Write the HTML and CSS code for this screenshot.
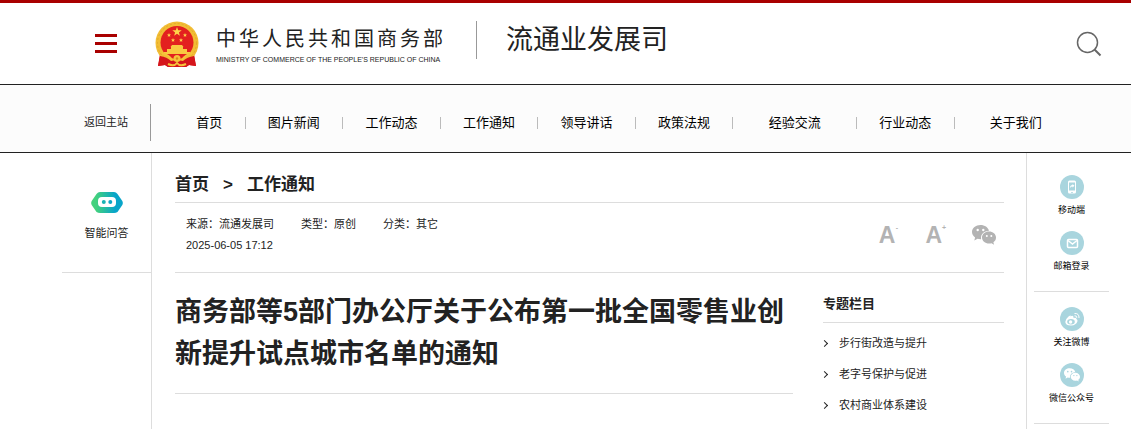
FILE: index.html
```html
<!DOCTYPE html>
<html lang="zh-CN">
<head>
  <meta charset="UTF-8" />
  <meta name="viewport" content="width=device-width, initial-scale=1.0" />
  <title>商务部等5部门办公厅关于公布第一批全国零售业创新提升试点城市名单的通知</title>
  <link rel="stylesheet" href="styles.css">
</head>
<body>
  <svg class="defs" width="0" height="0" aria-hidden="true">
    <symbol id="wechat" viewBox="0 0 24 20">
      <path fill="currentColor" d="M8.500 0C3.800 0 0 3.100 0 7c0 2.200 1.200 4.100 3.100 5.400L2.300 15.500l3.200-1.800c1 .3 2 .5 3 .5h.6C8.300 9.300 12 5.700 17 5.700 16.200 2.400 12.700 0 8.500 0z"/>
      <path fill="currentColor" d="M24 12.600c0-3.400-3.100-6-7-6s-7 2.600-7 6 3.100 6 7 6c.9 0 1.700-.1 2.500-.4l2.600 1.600-.7-2.500c1.700-1.100 2.600-2.700 2.600-4.700z"/>
      <g class="eyes"><circle cx="5.700" cy="5" r="1.200"/><circle cx="11.300" cy="5" r="1.200"/><circle cx="14.800" cy="10.900" r="1"/><circle cx="19.300" cy="10.900" r="1"/></g>
    </symbol>
  </svg>

  <header class="header">
    <button class="menu-btn" aria-label="菜单"><span></span><span></span><span></span></button>
    <a class="logo" href="#">
      <svg class="emblem" viewBox="0 0 44 48" aria-hidden="true">
        <path fill="#d5151b" d="M5 33 3 45l7-1 3 2h18l3-2 7 1-2-12z"/>
        <circle cx="22" cy="22" r="21.500" fill="#f2bd35"/>
        <circle cx="22" cy="22" r="19.500" fill="none" stroke="#e3a82a" stroke-width="1" stroke-dasharray="2 2"/>
        <circle cx="22" cy="21.500" r="16.500" fill="#e3201f"/>
        <path fill="#ffd54a" d="m22 6 1.200 3.300h3.500l-2.800 2.100 1 3.400-2.900-2-2.900 2 1-3.400-2.800-2.100h3.500z"/>
        <path fill="#ffd54a" d="m14 12 .6 1.400H16l-1.100 1 .4 1.600-1.300-.9-1.300.9.4-1.600-1.100-1h1.400zM30 12l.6 1.400H32l-1.100 1 .4 1.600-1.300-.9-1.300.9.4-1.600-1.100-1h1.400zM18 17l.6 1.400H20l-1.100 1 .4 1.600-1.300-.9-1.300.9.4-1.600-1.100-1h1.400zM26 17l.6 1.400H28l-1.100 1 .4 1.600-1.300-.9-1.300.9.4-1.600-1.100-1h1.400z"/>
        <path fill="#f9c941" d="M17 24h10l1.500 2H28v2h4v3h3v2H9v-2h3v-3h4v-2h-.500z"/>
        <path fill="#d5151b" d="M5 35q7 1 11 5l6-1 6 1q4-4 11-5l2 10-7-1-3 2H13l-3-2-7 1z"/>
        <path fill="none" stroke="#f6c33a" stroke-width="2" d="M7 32q7 2 10 7M37 32q-7 2-10 7M13 43q6 3 9-1 3 4 9 1"/>
        <circle cx="22" cy="37.500" r="3.500" fill="#f6c33a"/>
        <circle cx="22" cy="37.500" r="1.200" fill="#d58b1c"/>
      </svg>
      <span class="logo-text">
        <span class="logo-cn">中华人民共和国商务部</span>
        <span class="logo-en">MINISTRY OF COMMERCE OF THE PEOPLE'S REPUBLIC OF CHINA</span>
      </span>
    </a>
    <a class="dept" href="#">流通业发展司</a>
    <button class="search-btn" aria-label="搜索">
      <svg width="26" height="26" viewBox="0 0 26 26" fill="none" stroke="#666" stroke-width="1.500"><circle cx="11.500" cy="11.500" r="10"/><path stroke-width="2" d="m18.500 18.500 6 6"/></svg>
    </button>
  </header>

  <nav class="nav">
    <a class="back" href="#">返回主站</a>
    <ul class="nav-list">
      <li><a href="#">首页</a></li>
      <li><a href="#">图片新闻</a></li>
      <li><a href="#">工作动态</a></li>
      <li><a href="#">工作通知</a></li>
      <li><a href="#">领导讲话</a></li>
      <li><a href="#">政策法规</a></li>
      <li><a class="wide" href="#">经验交流</a></li>
      <li><a href="#">行业动态</a></li>
      <li><a class="wide" href="#">关于我们</a></li>
    </ul>
  </nav>

  <div class="page">
    <aside class="left">
      <a class="robot" href="#">
        <svg width="32" height="22" viewBox="0 0 32 22" aria-hidden="true">
          <defs><linearGradient id="bot"><stop offset="0.150" stop-color="#43d17d"/><stop offset="0.750" stop-color="#08a5c9"/></linearGradient></defs>
          <path fill="url(#bot)" d="M9 0h14q2 0 3.500 2l4.800 7q1 2 0 4l-4.800 7q-1.500 1-3.500 1H9q-2 0-3.500-1L.7 13q-1-2 0-4l4.800-7Q7 0 9 0z"/>
          <rect x="7" y="5" width="18" height="10" rx="4" fill="#fff"/>
          <circle cx="12.800" cy="10" r="2" fill="#19b3b5"/><circle cx="19.300" cy="10" r="2" fill="#0ba6c6"/>
        </svg>
        <span>智能问答</span>
      </a>
    </aside>

    <main class="main">
      <div class="crumbs"><a href="#">首页</a><span>&gt;</span><a href="#">工作通知</a></div>
      <div class="info">
        <div class="meta">
          <span>来源：流通发展司</span>
          <span>类型：原创</span>
          <span>分类：其它</span>
          <time datetime="2025-06-05T17:12">2025-06-05 17:12</time>
        </div>
        <div class="tools">
          <button aria-label="缩小字体">A<sup>-</sup></button>
          <button aria-label="放大字体">A<sup>+</sup></button>
          <button aria-label="微信分享"><svg width="24" height="20"><use href="#wechat"/></svg></button>
        </div>
      </div>
      <div class="content">
        <article class="article">
          <h1>商务部等5部门办公厅关于公布第一批全国零售业创新提升试点城市名单的通知</h1>
        </article>
        <section class="topics">
          <h2>专题栏目</h2>
          <ul>
            <li><a href="#">步行街改造与提升</a></li>
            <li><a href="#">老字号保护与促进</a></li>
            <li><a href="#">农村商业体系建设</a></li>
          </ul>
        </section>
      </div>
    </main>

    <aside class="right">
      <div class="group">
        <a href="#">
          <span class="round"><svg width="24" height="24" viewBox="0 0 24 24"><rect x="8" y="5.500" width="8" height="13" rx="1.500" fill="#fff"/><path fill="#a9d5de" d="M9 7.500h6v8H9zM11 17h2v.7h-2z"/><path fill="#fff" d="M10 13q0-3 2.500-3V9l2 1.800-2 1.800v-1q-1.500 0-2.500 1.400z"/></svg></span>
          <span>移动端</span>
        </a>
        <a href="#">
          <span class="round"><svg width="24" height="24" viewBox="0 0 24 24" fill="none" stroke="#fff" stroke-width="1.500"><rect x="7.500" y="8.500" width="10" height="8" rx="1"/><path d="m8 9.500 4.500 3.500L17 9.500"/></svg></span>
          <span>邮箱登录</span>
        </a>
      </div>
      <div class="group">
        <a href="#">
          <span class="round"><svg width="24" height="24" viewBox="0 0 24 24"><path fill="#fff" d="M10.500 9.500q2-1.500 3 .2.200.7-.1 1.300 3-.8 3 1 1.600.7 1 2.500-1.400 3.700-6 4-5.700.2-6.100-3.500Q5.500 12 8.500 9.500q3-2 2 0z"/><ellipse cx="11" cy="14.700" rx="3.800" ry="2.700" fill="#a9d5de"/><circle cx="10.600" cy="15" r="1.700" fill="#fff"/><path fill="none" stroke="#fff" d="M14.500 8.800q2.500-.3 2.300 2M14.500 6.500q4.800-.4 4.500 4.500"/></svg></span>
          <span>关注微博</span>
        </a>
        <a href="#">
          <span class="round"><svg class="wx" width="16" height="14"><use href="#wechat"/></svg></span>
          <span>微信公众号</span>
        </a>
      </div>
    </aside>
  </div>
</body>
</html>
```
FILE: styles.css
```css
* {
  box-sizing: border-box;
}
body {
  margin: 0;
  min-height: 100vh;
  display: flex;
  flex-direction: column;
  font-family: "Liberation Sans", "Noto Sans CJK SC", sans-serif;
  font-size: 11px;
  color: #222;
  background: #fff;
}
a {
  color: inherit;
  text-decoration: none;
}
ul {
  list-style: none;
  margin: 0;
  padding: 0;
}
button {
  padding: 0;
  border: none;
  background: none;
  font-family: inherit;
  cursor: pointer;
}
svg {
  display: block;
}
.defs {
  position: absolute;
}
.eyes {
  fill: var(--eye, #fff);
}

/* header */
.header {
  display: flex;
  align-items: center;
  height: 85px;
  padding: 0 29px 0 95px;
  border-top: 3px solid #a90000;
  border-bottom: 1px solid #222;
}
.menu-btn {
  display: flex;
  flex-direction: column;
  gap: 5px;
  width: 22px;
}
.menu-btn span {
  height: 3px;
  background: #a90000;
}
.logo {
  display: flex;
  align-items: center;
  gap: 17px;
  margin-left: 38px;
  padding-top: 2px;
}
.emblem {
  width: 44px;
  height: 48px;
}
.logo-text {
  display: flex;
  flex-direction: column;
  gap: 4px;
  padding-top: 2px;
  white-space: nowrap;
}
.logo-cn {
  font-size: 20px;
  line-height: 24px;
  letter-spacing: 3px;
}
.logo-en {
  font-size: 7px;
  line-height: 10px;
}
.dept {
  margin: 0 auto 7px 30px;
  padding-left: 29px;
  border-left: 1px solid #999;
  font-size: 27px;
  line-height: 38px;
  white-space: nowrap;
}

/* navigation */
.nav {
  display: flex;
  align-items: center;
  height: 68px;
  padding: 8px 54px 0 62px;
  background: #fcfcfc;
  border-bottom: 1px solid #222;
}
.back {
  flex: none;
  width: 89px;
  padding-left: 22px;
  border-right: 1px solid #999;
  line-height: 37px;
}
.nav-list {
  flex: 1;
  display: flex;
  margin-left: 23px;
  font-size: 13px;
  color: #000;
}
.nav-list li {
  flex: 1 0 auto;
  text-align: center;
}
.nav-list li + li {
  border-left: 1px solid #bbb;
}
.nav-list a {
  display: block;
  padding: 0 22px;
  line-height: 12px;
  white-space: nowrap;
}
.nav-list .wide {
  padding: 0 35px;
}

/* page columns */
.page {
  flex: 1;
  display: flex;
  padding-left: 62px;
}
.left {
  flex: none;
  width: 90px;
  border-right: 1px solid #ddd;
}
.robot {
  display: flex;
  flex-direction: column;
  align-items: center;
  gap: 11px;
  height: 120px;
  padding-top: 39px;
  border-bottom: 1px solid #ddd;
  line-height: 16px;
}
.main {
  flex: 1;
  padding: 0 22px 0 23px;
}
.crumbs {
  display: flex;
  gap: 14px;
  padding: 21px 0 6px;
  border-bottom: 1px solid #ddd;
  font-size: 17px;
  line-height: 22px;
  font-weight: bold;
}
.info {
  display: flex;
  justify-content: space-between;
  padding: 11px 8px 16px 11px;
  border-bottom: 1px solid #ddd;
}
.meta {
  display: flex;
  flex-wrap: wrap;
  column-gap: 27px;
  line-height: 21px;
}
.meta time {
  width: 100%;
}
.tools {
  display: flex;
  flex: none;
  align-items: center;
  gap: 27px;
  color: #b3b3b3;
}
.tools button {
  display: flex;
  color: inherit;
  font-size: 23px;
  line-height: 24px;
  font-weight: bold;
}
.tools sup {
  width: 3px;
  font-size: 7px;
  line-height: 10px;
}
.content {
  display: flex;
  gap: 30px;
}
.article {
  flex: 1;
  padding: 18px 0;
  border-bottom: 1px solid #ddd;
  align-self: flex-start;
}
h1 {
  margin: 0;
  font-size: 27px;
  line-height: 42px;
}
.topics {
  flex: none;
  width: 181px;
}
h2 {
  margin: 0 0 5px;
  padding: 20px 0 8px;
  border-bottom: 1px solid #ddd;
  font-size: 13px;
  line-height: 21px;
}
.topics a {
  display: flex;
  align-items: center;
  gap: 12px;
  line-height: 31px;
}
.topics a::before {
  content: "";
  width: 4px;
  height: 4px;
  box-sizing: content-box;
  margin-left: -1px;
  border: solid #222;
  border-width: 1px 1px 0 0;
  transform: rotate(45deg);
}

/* right shortcuts */
.right {
  flex: none;
  width: 105px;
  padding: 6px 22px 0 7px;
  border-left: 1px solid #ddd;
}
.group {
  display: flex;
  flex-direction: column;
  gap: 15px;
  padding: 16px 0 19px;
  border-bottom: 1px solid #ddd;
}
.group + .group {
  padding-top: 15px;
}
.group a {
  display: flex;
  flex-direction: column;
  align-items: center;
  gap: 5px;
  font-size: 9px;
  line-height: 12px;
  color: #000;
}
.round {
  display: flex;
  align-items: center;
  justify-content: center;
  width: 24px;
  height: 24px;
  border-radius: 50%;
  background: #a9d5de;
}
.wx {
  color: #fff;
  --eye: #a9d5de;
}
```
